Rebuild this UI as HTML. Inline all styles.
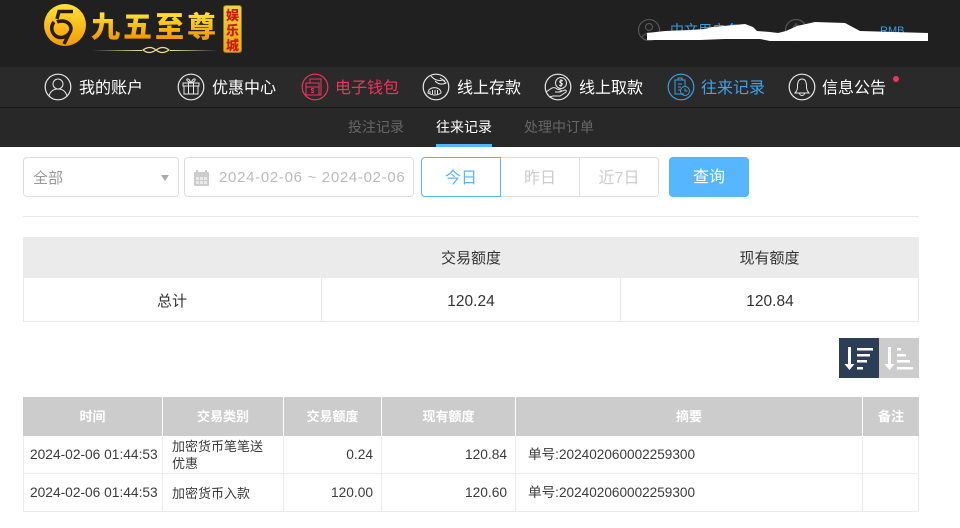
<!DOCTYPE html>
<html lang="zh">
<head>
<meta charset="utf-8">
<style>
*{box-sizing:border-box}
html,body{margin:0;padding:0;width:960px;height:528px;overflow:hidden;background:#fff;font-family:"Liberation Sans","Noto Sans CJK SC",sans-serif;color:#333}
.a{position:absolute;white-space:nowrap}
.nav{font-size:16px;line-height:24px;top:77px;color:#fff;width:66px}
.sub{font-size:14px;line-height:20px;top:117px;color:#666}
svg{position:absolute;overflow:visible}
.ic{width:28px;height:28px;top:73px;fill:none;stroke:#e8e8e8;stroke-width:1}
.ic circle.o{stroke-width:1.2}
.box{position:absolute;border:1px solid #ddd;background:#fff}
.c{text-align:center}
.th{position:absolute;top:397px;height:39px;background:#ccc;color:#fff;font-size:13px;font-weight:bold;line-height:40px;text-align:center}
.td{position:absolute;font-size:13px;color:#3c3c3c;white-space:nowrap}
.n{font-size:13.75px}
.line{position:absolute;background:#ececec}
</style>
</head>
<body>
<div class="a" style="left:0;top:0;width:960px;height:67px;background:#202020"></div>
<div class="a" style="left:0;top:67px;width:960px;height:40px;background:#2a2a2a"></div>
<div class="a" style="left:0;top:107px;width:960px;height:1px;background:#161616"></div>
<div class="a" style="left:0;top:108px;width:960px;height:39px;background:#282828"></div>

<svg style="left:43px;top:3px;width:44px;height:44px" viewBox="0 0 44 44">
<defs><linearGradient id="g" x1="0" y1="0" x2="0" y2="1"><stop offset="0" stop-color="#ffe23a"/><stop offset="1" stop-color="#f79a00"/></linearGradient></defs>
<circle cx="22" cy="22" r="21" fill="url(#g)"/>
<path d="M30 8.500H16L14 16M11 19Q7 24 10 30Q14 36 21 34Q28 31 28 25Q27 19 20 18Q16 18 14 19M28 27L21 41" fill="none" stroke="#2a1c05" stroke-width="3.5"/>
</svg>
<div class="a" style="left:91px;top:7px;font:900 29px/36px 'Noto Sans CJK SC',sans-serif;letter-spacing:3px;background:linear-gradient(#ffe030 20%,#f59a00 85%);-webkit-background-clip:text;background-clip:text;color:transparent">九五至尊</div>
<div class="a" style="left:92px;top:50px;width:50px;height:1px;background:linear-gradient(90deg,rgba(239,227,168,0),#efe3a8)"></div>
<div class="a" style="left:170px;top:50px;width:48px;height:1px;background:linear-gradient(90deg,#efe3a8,rgba(239,227,168,0))"></div>
<svg style="left:91px;top:44px;width:128px;height:12px" viewBox="0 0 128 12">
<path d="M52 6q7-5 13 0t13 0q-6-5-13 0t-13 0z" fill="none" stroke="#e8dca0" stroke-width="1.200"/>
</svg>
<div class="a" style="left:223px;top:5px;width:19px;height:48px;border-radius:3px;background:linear-gradient(#f5d23a,#f0a80a);border:1px solid #8a7a30;color:#c81a10;font:900 13px/15px 'Noto Sans CJK SC',sans-serif;text-align:center;white-space:normal;padding-top:1px">娱<br>乐<br>城</div>

<svg style="left:638px;top:19px;width:22px;height:22px;fill:none;stroke:#555;stroke-width:1.2" viewBox="0 0 22 22"><circle cx="11" cy="11" r="10.5"/><circle cx="11" cy="8" r="3.5"/><path d="M4 18q7-8 14 0"/></svg>
<svg style="left:785px;top:19px;width:22px;height:22px;fill:none;stroke:#555;stroke-width:1.2" viewBox="0 0 22 22"><circle cx="11" cy="11" r="10.5"/><path d="M14 7q-3-2-5 0t1 4q4 1 3 3t-5 0M11 4v14"/></svg>
<div class="a" style="left:670px;top:21px;font-size:14px;line-height:18px;color:#3a9be0">中文用户名</div>
<div class="a" style="left:880px;top:25px;font-size:11px;line-height:12px;color:#3a9be0">RMB</div>
<svg style="left:0;top:0;width:960px;height:60px"><polygon fill="#fff" points="647,33 665,31 690,30 705,29 712,27 745,24 753,27 757,31 770,32 778,33 786,31 797,26 815,22 845,23 860,31 928,33 928,41 770,41 760,39 725,39 700,40 647,40"/></svg>

<!-- nav -->
<svg class="ic" style="left:44px" viewBox="0 0 28 28"><circle class="o" cx="14" cy="14" r="12.8"/><circle cx="14" cy="11" r="5"/><path d="M5 23q2-7 9-7t9 7"/></svg>
<div class="a nav" style="left:79px">我的账户</div>
<svg class="ic" style="left:177px" viewBox="0 0 28 28"><circle class="o" cx="14" cy="14" r="12.8"/><path d="M6 10H22V13H6zM7 13V21H21V13M11.500 10V21M16.500 10V21M14 10Q9 8 10 6Q12 5 14 10Q16 5 18 6Q19 8 14 10"/></svg>
<div class="a nav" style="left:212px">优惠中心</div>
<svg class="ic" style="left:301px;stroke:#f0345e" viewBox="0 0 28 28"><circle class="o" cx="14" cy="14" r="12.8"/><path d="M9 10V6H20V22H9M5 10H18V22H5zM5 14H18"/><path d="M13 16q-2-1-2.500 0t1 1.500q1.500.5 1 1.500t-2.500 0"/></svg>
<div class="a nav" style="left:335px;color:#f0345e">电子钱包</div>
<svg class="ic" style="left:422px" viewBox="0 0 28 28"><circle class="o" cx="14" cy="14" r="12.800"/><path d="M9 3Q14 9 21 7L24 10Q18 13 13 8M18 5l5 3M6 20a6 5 0 0 1 13 0q-6 4-13 0zM8 18v3M10.500 17v4M13 17v4M15.500 17v4"/></svg>
<div class="a nav" style="left:457px">线上存款</div>
<svg class="ic" style="left:544px" viewBox="0 0 28 28"><circle class="o" cx="14" cy="14" r="12.800"/><circle cx="17" cy="10" r="5.500"/><path d="M19 8q-2-1-3 0t1 2q2 .5 1 2t-3 0M17 6v8M2 19l6-4q3-1 5 1l4 1q1 2-2 2H11M15 19l6-2q2 0 1 2l-6 4H9l-4 1"/></svg>
<div class="a nav" style="left:579px">线上取款</div>
<svg class="ic" style="left:667px;stroke:#3e9fe0" viewBox="0 0 28 28"><circle class="o" cx="14" cy="14" r="12.800"/><path d="M17 21H8V7H18V13M11 7V5H15V7M11 11H15M11 14H14M11 17H13"/><circle cx="18" cy="18" r="4.500"/><path d="M18 15.500V18H20.500"/></svg>
<div class="a nav" style="left:701px;color:#3ea3ea">往来记录</div>
<svg class="ic" style="left:788px" viewBox="0 0 28 28"><circle class="o" cx="14" cy="14" r="12.800"/><path d="M7 20Q10 17 9.500 12Q10 6 14 6Q18 6 18.500 12Q18 17 21 20ZM11.500 20a2.500 2.500 0 0 0 5 0"/></svg>
<div class="a nav" style="left:822px">信息公告</div>
<div class="a" style="left:893px;top:76px;width:6px;height:6px;border-radius:50%;background:#f0345e"></div>

<!-- subnav -->
<div class="a sub" style="left:348px">投注记录</div>
<div class="a sub" style="left:436px;color:#fff">往来记录</div>
<div class="a sub" style="left:524px">处理中订单</div>
<div class="a" style="left:436px;top:144px;width:56px;height:3px;background:#56b6ff"></div>

<!-- filters -->
<div class="box" style="left:23px;top:157px;width:156px;height:40px;border-radius:4px"></div>
<div class="a" style="left:33px;top:169px;font-size:15px;line-height:20px;color:#999">全部</div>
<div class="a" style="left:161px;top:175px;width:0;height:0;border-left:4px solid transparent;border-right:4px solid transparent;border-top:6px solid #aaa"></div>
<div class="box" style="left:184px;top:157px;width:230px;height:40px;border-radius:4px"></div>
<svg style="left:193px;top:169px;width:17px;height:18px" viewBox="0 0 17 18"><rect x="1" y="3" width="15" height="14" rx="1" fill="#ccc"/><rect x="3" y="8" width="11" height="7" fill="#e9e9e9"/><path d="M4 1v4M13 1v4" stroke="#ccc" stroke-width="2"/><path d="M6.500 8v7M10.500 8v7M3 11.500h11" stroke="#ccc"/></svg>
<div class="a" style="left:219px;top:168px;font-size:15px;line-height:20px;color:#bbb;letter-spacing:.69px">2024-02-06 ~ 2024-02-06</div>

<div class="box" style="left:421px;top:157px;width:238px;height:40px;border-radius:4px"></div>
<div class="a" style="left:579px;top:157px;width:1px;height:40px;background:#ddd"></div>
<div class="box c" style="left:421px;top:157px;width:80px;height:40px;border-color:#56b6ff;border-radius:4px 0 0 4px;color:#56b6ff;font-size:16px;line-height:41px">今日</div>
<div class="a c" style="left:501px;top:157px;width:78px;line-height:43px;font-size:16px;color:#ccc">昨日</div>
<div class="a c" style="left:580px;top:157px;width:78px;line-height:43px;font-size:16px;color:#ccc">近7日</div>
<div class="a c" style="left:669px;top:157px;width:80px;height:40px;background:#56b6ff;border-radius:4px;color:#fff;font-size:16px;line-height:41px">查询</div>
<div class="line" style="left:23px;top:216px;width:896px;height:1px;background:#e8e8e8"></div>

<!-- summary -->
<div class="a" style="left:23px;top:237px;width:896px;height:41px;background:#ebebeb"></div>
<div class="a c" style="left:322px;top:237px;width:298px;line-height:44px;font-size:15px">交易额度</div>
<div class="a c" style="left:620px;top:237px;width:299px;line-height:44px;font-size:15px">现有额度</div>
<div class="box" style="left:23px;top:278px;width:896px;height:44px;border-color:#e8e8e8;border-top:none"></div>
<div class="line" style="left:321px;top:278px;width:1px;height:44px;background:#e8e8e8"></div>
<div class="line" style="left:620px;top:278px;width:1px;height:44px;background:#e8e8e8"></div>
<div class="a c" style="left:23px;top:280px;width:298px;line-height:43px;font-size:15px">总计</div>
<div class="a c" style="left:322px;top:280px;width:298px;line-height:43px;font-size:15.500px">120.24</div>
<div class="a c" style="left:621px;top:280px;width:298px;line-height:43px;font-size:15.500px">120.84</div>

<!-- sort buttons -->
<div class="a" style="left:839px;top:338px;width:40px;height:40px;background:#2c3e55"></div>
<div class="a" style="left:879px;top:338px;width:40px;height:40px;background:#ccc"></div>
<svg style="left:839px;top:338px;width:80px;height:40px" viewBox="0 0 80 40" fill="#fff">
<rect x="9" y="9" width="3" height="18"/><path d="M5.500 26H15.500L10.500 32z"/>
<rect x="18" y="10" width="16" height="2.500"/><rect x="18" y="16" width="13" height="2.500"/><rect x="18" y="22" width="10" height="2.500"/><rect x="18" y="29" width="6" height="2.500"/>
<rect x="49" y="9" width="3" height="18"/><path d="M45.500 26H55.500L50.500 32z"/>
<rect x="58" y="10" width="4" height="2.500"/><rect x="58" y="16" width="9" height="2.500"/><rect x="58" y="22" width="13" height="2.500"/><rect x="58" y="29" width="16" height="2.500"/>
</svg>

<!-- table -->
<div class="th" style="left:23px;width:139px">时间</div>
<div class="th" style="left:163px;width:120px">交易类别</div>
<div class="th" style="left:284px;width:97px">交易额度</div>
<div class="th" style="left:382px;width:133px">现有额度</div>
<div class="th" style="left:516px;width:346px">摘要</div>
<div class="th" style="left:863px;width:56px">备注</div>

<div class="line" style="left:23px;top:436px;width:1px;height:76px"></div>
<div class="line" style="left:162px;top:436px;width:1px;height:76px"></div>
<div class="line" style="left:283px;top:436px;width:1px;height:76px"></div>
<div class="line" style="left:381px;top:436px;width:1px;height:76px"></div>
<div class="line" style="left:515px;top:436px;width:1px;height:76px"></div>
<div class="line" style="left:862px;top:436px;width:1px;height:76px"></div>
<div class="line" style="left:918px;top:436px;width:1px;height:76px"></div>
<div class="line" style="left:23px;top:473px;width:896px;height:1px"></div>
<div class="line" style="left:23px;top:511px;width:896px;height:1px"></div>

<div class="td n" style="left:30px;top:446px;line-height:18px">2024-02-06 01:44:53</div>
<div class="td" style="left:172px;top:438px;line-height:17px">加密货币笔笔送<br>优惠</div>
<div class="td n" style="left:284px;width:89px;text-align:right;top:446px;line-height:18px">0.24</div>
<div class="td n" style="left:382px;width:125px;text-align:right;top:446px;line-height:18px">120.84</div>
<div class="td" style="left:528px;top:446px;line-height:18px;font-size:13.600px">单号:202402060002259300</div>

<div class="td n" style="left:30px;top:484px;line-height:18px">2024-02-06 01:44:53</div>
<div class="td" style="left:172px;top:485px;line-height:18px">加密货币入款</div>
<div class="td n" style="left:284px;width:89px;text-align:right;top:484px;line-height:18px">120.00</div>
<div class="td n" style="left:382px;width:125px;text-align:right;top:484px;line-height:18px">120.60</div>
<div class="td" style="left:528px;top:484px;line-height:18px;font-size:13.600px">单号:202402060002259300</div>
</body>
</html>
